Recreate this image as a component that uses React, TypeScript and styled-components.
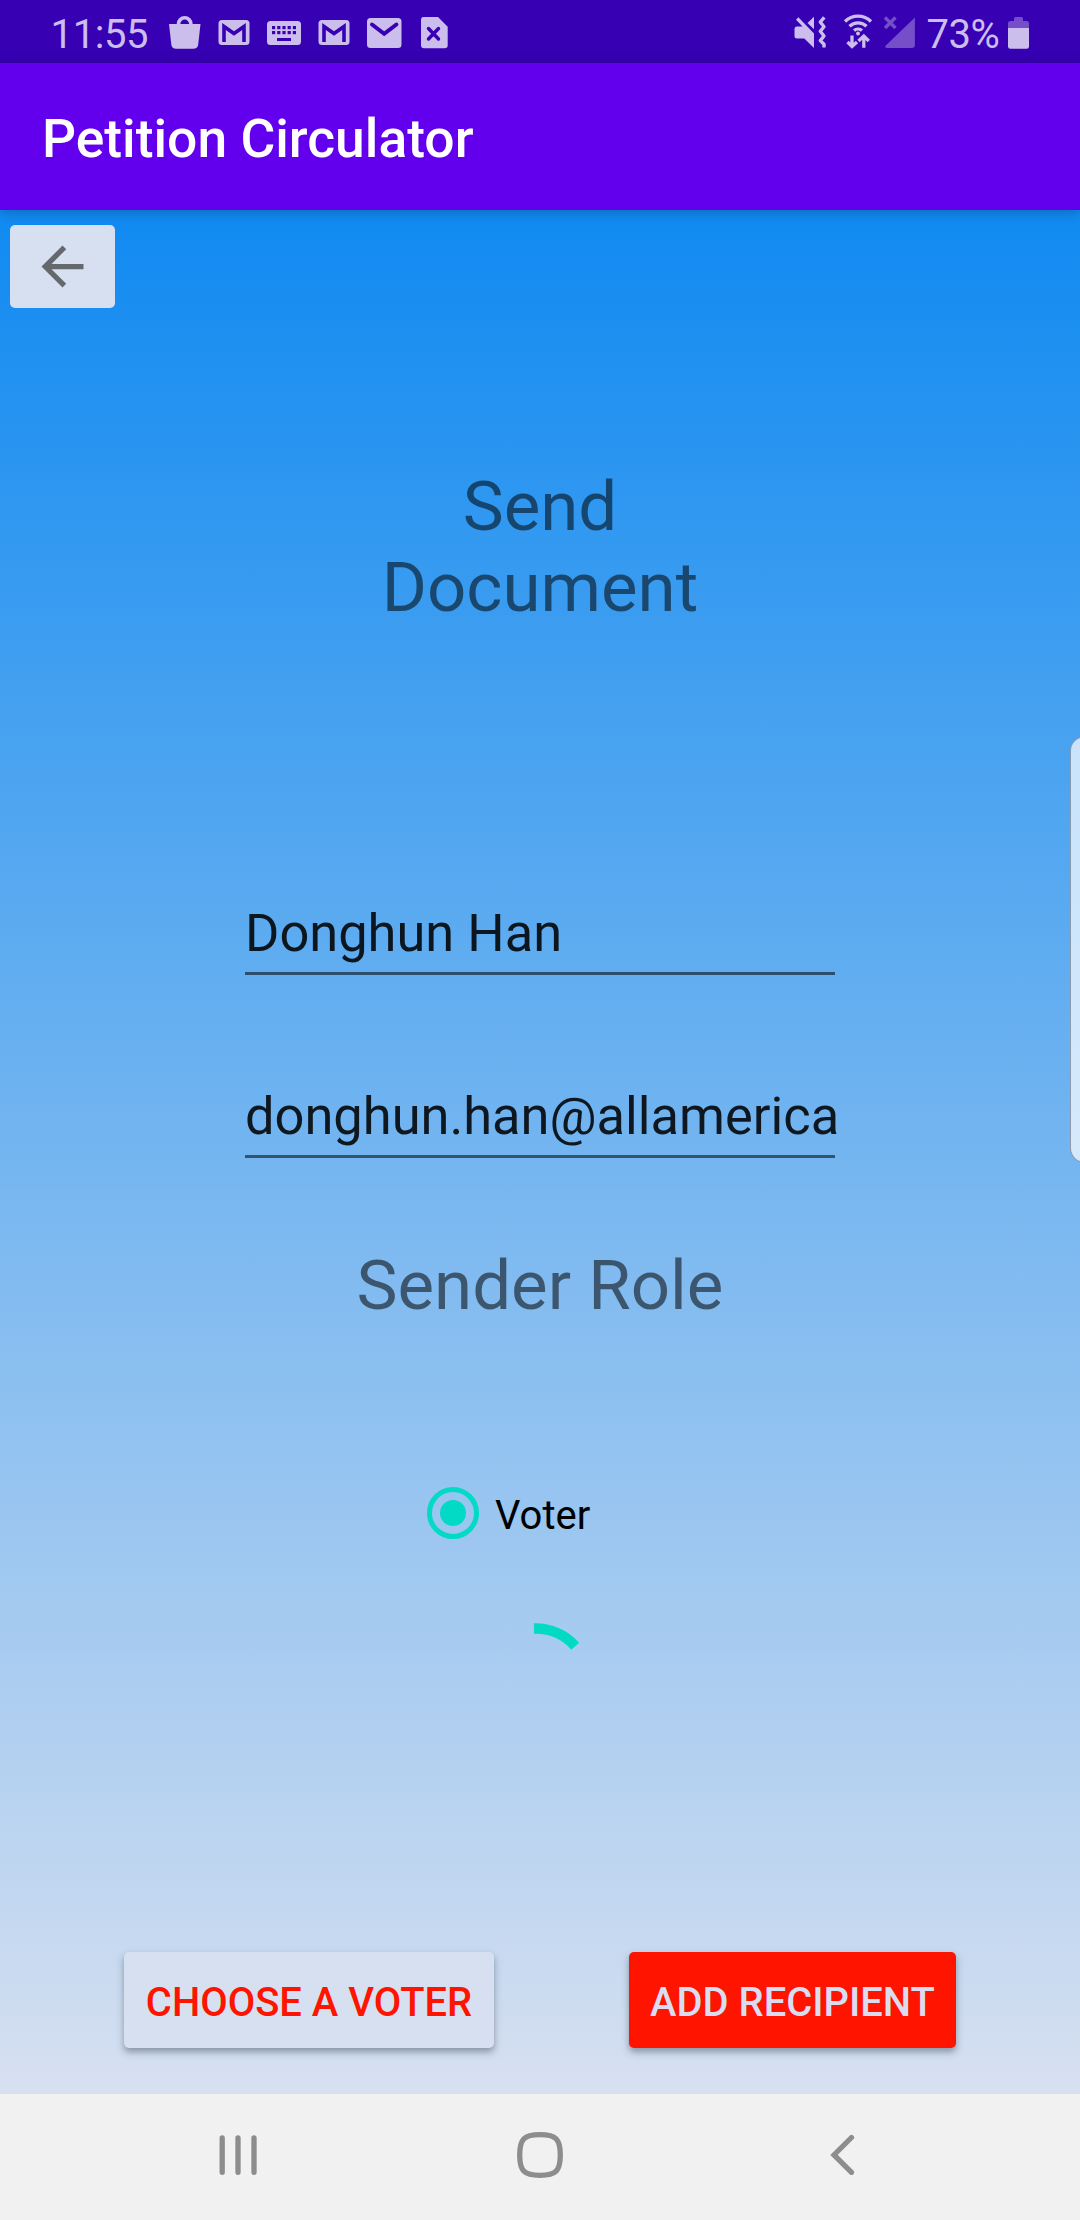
import React from "react";
import styled, { createGlobalStyle } from "styled-components";

const GlobalStyle = createGlobalStyle`
  * { box-sizing: border-box; }
  body { margin: 0; font-family: Roboto, "Noto Sans", sans-serif; }
  svg { display: block; flex: none; }
`;

const Screen = styled.div`
  position: relative;
  width: 1080px;
  height: 2220px;
  display: flex;
  flex-direction: column;
  overflow: hidden;
`;

const StatusBar = styled.header`
  height: 63px;
  flex: none;
  display: flex;
  align-items: flex-start;
  justify-content: space-between;
  padding: 0 40px 0 50px;
  background: #3700b3;
  color: #cbbeed;
`;

const StatusGroup = styled.div`
  display: flex;
`;

const StatusText = styled.span<{ $indent: number; $width: number }>`
  flex: none;
  width: ${(p) => p.$width}px;
  height: 63px;
  padding: 5px 0 0 ${(p) => p.$indent}px;
  line-height: 60px;
  font-size: 40px;
  letter-spacing: -0.4px;
  white-space: nowrap;
`;

const AppBar = styled.div`
  position: relative;
  z-index: 1;
  height: 147px;
  flex: none;
  display: flex;
  align-items: center;
  padding: 5px 42px 0;
  background: #6200ee;
  box-shadow: 0 2px 12px rgba(0, 0, 0, 0.24);
`;

const AppTitle = styled.h1`
  margin: 0;
  color: #fff;
  font-size: 53.4px;
  font-weight: 500;
  line-height: 64px;
`;

const Content = styled.main`
  height: 1884px;
  flex: none;
  display: flex;
  flex-direction: column;
  align-items: center;
  background: linear-gradient(to bottom, #108af1, #d7e0f0);
`;

const BackButton = styled.button`
  align-self: flex-start;
  width: 105px;
  height: 83px;
  margin: 15px 0 0 10px;
  padding: 0;
  display: flex;
  align-items: center;
  justify-content: center;
  border: 0;
  border-radius: 5px;
  background: #d7e0f0;
`;

const Heading = styled.h2<{ $top: number }>`
  margin: ${(p) => p.$top}px 0 0;
  width: 400px;
  text-align: center;
  font-size: 69px;
  font-weight: 400;
  line-height: 81px;
  color: rgba(0, 0, 0, 0.54);
`;

const Field = styled.div<{ $top: number }>`
  width: 590px;
  height: 73px;
  margin-top: ${(p) => p.$top}px;
  border-bottom: 3px solid rgba(0, 0, 0, 0.54);
  line-height: 62px;
  font-size: 52.4px;
  color: rgba(0, 0, 0, 0.87);
  white-space: nowrap;
`;

const RadioRow = styled.label`
  align-self: flex-start;
  margin: 145px 0 0 427px;
  height: 84px;
  display: flex;
  align-items: center;
  gap: 16px;
`;

const Ring = styled.span`
  width: 52px;
  height: 52px;
  display: flex;
  align-items: center;
  justify-content: center;
  border: 5px solid #03dac5;
  border-radius: 50%;
`;

const Dot = styled.span`
  width: 26px;
  height: 26px;
  border-radius: 50%;
  background: #03dac5;
`;

const RadioText = styled.span`
  padding-top: 4px;
  font-size: 40px;
  color: #000;
`;

const SpinnerBox = styled.div`
  width: 126px;
  height: 126px;
  margin-top: 60px;
`;

const Actions = styled.div`
  width: 832px;
  margin-top: 211px;
  display: flex;
  justify-content: space-between;
`;

const ActionButton = styled.button<{ $width: number; $bg: string; $fg: string }>`
  width: ${(p) => p.$width}px;
  height: 96px;
  padding: 5px 0 0;
  border: 0;
  border-radius: 5px;
  background: ${(p) => p.$bg};
  color: ${(p) => p.$fg};
  font: 500 39.9px/46px Roboto, sans-serif;
  text-transform: uppercase;
  white-space: nowrap;
  box-shadow: 0 4px 7px rgba(60, 75, 90, 0.5);
`;

const NavBar = styled.nav`
  height: 126px;
  flex: none;
  display: flex;
  background: #f1f1f1;
`;

const EdgeHandle = styled.div`
  position: absolute;
  z-index: 2;
  left: 1070px;
  top: 736px;
  width: 30px;
  height: 427px;
  border: 1px solid rgba(100, 115, 130, 0.65);
  border-radius: 17px;
  background: rgba(255, 255, 255, 0.7);
`;

const NotificationIcons = () => (
  <svg width="300" height="63" viewBox="160 0 300 63" fill="#cbbeed">
    <path d="M169 24h31.500l-2.300 20.500q-.6 4.300-5 4.300h-17q-4.300 0-4.900-4.300z" />
    <path d="M178.500 26v-2a6.200 6.200 0 0 1 12.400 0v2" fill="none" stroke="#cbbeed" strokeWidth="3.600" />
    {[0, 100].map((dx) => (
      <g key={dx} transform={`translate(${dx} 0)`}>
        <rect x="218.500" y="20" width="31" height="25" rx="3.500" />
        <path d="M224 42V26.500l10 7 10-7V42" fill="none" stroke="#3700b3" strokeWidth="3.600" />
      </g>
    ))}
    <rect x="267" y="21" width="34" height="24" rx="3.500" />
    <g fill="#3700b3">
      {[272, 277.2, 282.4, 287.6, 292.8].map((x) => (
        <React.Fragment key={x}>
          <rect x={x} y="26" width="3.200" height="3.200" />
          <rect x={x} y="31" width="3.200" height="3.200" />
        </React.Fragment>
      ))}
      <rect x="277" y="38" width="14" height="3" />
    </g>
    <rect x="367" y="18" width="34.500" height="30" rx="3.500" />
    <path d="M372 24.500l12.200 9.300 12.200-9.300" fill="none" stroke="#3700b3" strokeWidth="4" strokeLinecap="round" />
    <path d="M423.500 17H438l9.700 9.700v18.500q0 3-3 3H424q-3 0-3-3V20q0-3 2.500-3z" />
    <path d="M428.500 28.500l10 10.500M438.500 28.500l-10 10.500" stroke="#3700b3" strokeWidth="3.400" strokeLinecap="round" />
  </svg>
);

const SystemIcons = () => (
  <svg width="130" height="63" viewBox="790 0 130 63" fill="#cbbeed">
    <path d="M796 19.800l2.400-2.500L814 33.500V48l-9.700-9.500H797q-2.500 0-2.500-2.500v-7q0-2.500 2.500-2.500h5.500z" />
    <path d="M814 16.800v12.400l-6.500-6.200z" />
    <path d="M824.300 17.300L820.300 22L824 26.700L820.300 31.300L824 36L820.300 40.600L824 44.300V47.500" fill="none" stroke="#cbbeed" strokeWidth="3.400" strokeLinejoin="round" />
    <g fill="none" stroke="#cbbeed" strokeWidth="3.300">
      <path d="M845 21.500a18.500 18.500 0 0 1 26 0M849.500 26.200a12.300 12.300 0 0 1 17 0M854 30.600a6.200 6.200 0 0 1 8 0" />
      <path d="M852 35.500v11M847.500 42l4.500 4.500 5-4.500M863.800 47.800V36.500M858.500 41l5.300-5 5 5" />
    </g>
    <circle cx="858" cy="33.500" r="1.900" />
    <path d="M914.900 17.500V45q0 3-3 3H887q-3.200-.4-1.200-2.400z" fill="#754fca" />
    <path d="M885 17.500l10.500 10.500M895.500 17.500L885 28" stroke="#754fca" strokeWidth="3.400" />
  </svg>
);

const BatteryIcon = () => (
  <svg width="40" height="63" viewBox="1000 0 40 63">
    <path d="M1008 28v-4.500q0-2.500 2.500-2.500h3.500v-2.500q0-1.500 1.500-1.500h6q1.500 0 1.500 1.500V21h3.500q2.500 0 2.500 2.500V28z" fill="#754fca" />
    <path d="M1008 28h21v18.500q0 2.300-2.300 2.300h-16.400q-2.300 0-2.300-2.300z" fill="#cbbeed" />
  </svg>
);

const NavIcons = () => (
  <svg width="1080" height="126" viewBox="0 2094 1080 126" fill="none" stroke="#8d8d8d" strokeWidth="5.300" strokeLinecap="round">
    <path d="M222.200 2138v34.300M238 2138v34.300M254 2138v34.300" />
    <path d="M540 2134.700c16 0 20.300 4.300 20.300 20.300s-4.300 20.300-20.300 20.300-20.300-4.300-20.300-20.300 4.300-20.300 20.300-20.300z" />
    <path d="M851.500 2137.500L834 2155l17.500 17.300" />
  </svg>
);

export default function App() {
  return (
    <Screen>
      <GlobalStyle />
      <StatusBar>
        <StatusGroup>
          <StatusText $indent={0.6} $width={110}>11:55</StatusText>
          <NotificationIcons />
        </StatusGroup>
        <StatusGroup>
          <SystemIcons />
          <StatusText $indent={6.4} $width={80}>73%</StatusText>
          <BatteryIcon />
        </StatusGroup>
      </StatusBar>
      <AppBar>
        <AppTitle>Petition Circulator</AppTitle>
      </AppBar>
      <Content>
        <BackButton aria-label="Back">
          <svg width="63" height="63" viewBox="0 0 24 24" fill="#65696e">
            <path d="M20 11H7.830l5.590-5.590L12 4l-8 8 8 8 1.410-1.410L7.830 13H20v-2z" />
          </svg>
        </BackButton>
        <Heading $top={158}>
          Send
          <br />
          Document
        </Heading>
        <Field $top={274}>Donghun Han</Field>
        <Field $top={110}>donghun.han@allamerica</Field>
        <Heading $top={87}>Sender Role</Heading>
        <RadioRow>
          <Ring>
            <Dot />
          </Ring>
          <RadioText>Voter</RadioText>
        </RadioRow>
        <SpinnerBox>
          <svg width="126" height="126" viewBox="477 1615 126 126" fill="none">
            <path d="M534 1628.600A53 53 0 0 1 575.200 1646.200" stroke="#03dac5" strokeWidth="10.600" />
          </svg>
        </SpinnerBox>
        <Actions>
          <ActionButton $width={370} $bg="#d7e0f0" $fg="#ff1400">Choose a voter</ActionButton>
          <ActionButton $width={327} $bg="#ff1400" $fg="#dcdcf0">Add recipient</ActionButton>
        </Actions>
      </Content>
      <NavBar>
        <NavIcons />
      </NavBar>
      <EdgeHandle />
    </Screen>
  );
}
